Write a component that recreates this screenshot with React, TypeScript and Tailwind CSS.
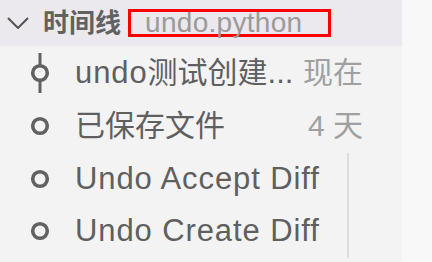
import React from "react";

const latin = { fontFamily: '"Liberation Sans", "Noto Sans CJK SC", sans-serif' };

function Ring() {
  return (
    <svg width="22" height="22" viewBox="0 0 22 22" className="block">
      <circle cx="11" cy="11" r="7.3" fill="none" stroke="#616161" strokeWidth="3.6" />
    </svg>
  );
}

function RingLine() {
  return (
    <svg width="22" height="40" viewBox="0 0 22 40" className="block">
      <line x1="11" y1="0" x2="11" y2="40" stroke="#616161" strokeWidth="3" />
      <circle cx="11" cy="20" r="7.3" fill="#f3f3f3" stroke="#616161" strokeWidth="3.6" />
    </svg>
  );
}

function Row({
  icon,
  children,
  time,
}: {
  icon: React.ReactNode;
  children: React.ReactNode;
  time?: React.ReactNode;
}) {
  return (
    <div className="flex h-[52.7px] items-center pr-[39px]">
      <div className="ml-[29px] flex w-[22px] justify-center">{icon}</div>
      <div className="ml-[24px] min-w-0 flex-1 truncate whitespace-nowrap text-[31px] leading-[42px] text-[#5f5f5f]">
        {children}
      </div>
      {time && (
        <div className="ml-[8px] whitespace-nowrap text-[30px] leading-[42px] text-[#a0a0a0]">{time}</div>
      )}
    </div>
  );
}

export default function App() {
  return (
    <div className="flex h-[262px] w-[432px] overflow-hidden bg-[#f8f8f8]" style={latin}>
      <div className="relative w-[402px] bg-[#f3f3f3]">
        <div className="flex h-[46px] items-center bg-[#ebe8ee]">
          <svg width="22" height="12" viewBox="0 0 22 12" className="ml-[7px] block">
            <polyline points="1,1 11,11 21,1" fill="none" stroke="#555555" strokeWidth="2" />
          </svg>
          <div className="ml-[14px] text-[26px] font-bold leading-none text-[#616161]">时间线</div>
          <div className="ml-[7px] flex h-[28px] w-[203px] items-center border-[3px] border-[#ff0000] pl-[14px]">
            <span className="text-[28px] leading-none tracking-[0.3px] text-[#9a9a9a]">undo.python</span>
          </div>
        </div>
        <div className="pt-[1px]">
          <Row icon={<RingLine />} time={<span>现在</span>}>
            <span className="tracking-[0.9px]">undo</span>
            <span className="text-[30px]">测试创建</span>
            <span>...</span>
          </Row>
          <Row icon={<Ring />} time={<span>4 天</span>}>
            <span className="text-[30px]">已保存文件</span>
          </Row>
          <Row icon={<Ring />}>
            <span className="tracking-[0.9px]">Undo Accept Diff</span>
          </Row>
          <Row icon={<Ring />}>
            <span className="tracking-[0.9px]">Undo Create Diff</span>
          </Row>
        </div>
        <div className="absolute left-[347px] top-[153px] h-[105px] w-[2px] bg-[#dddddd]" />
      </div>
      <div className="flex-1" />
    </div>
  );
}
